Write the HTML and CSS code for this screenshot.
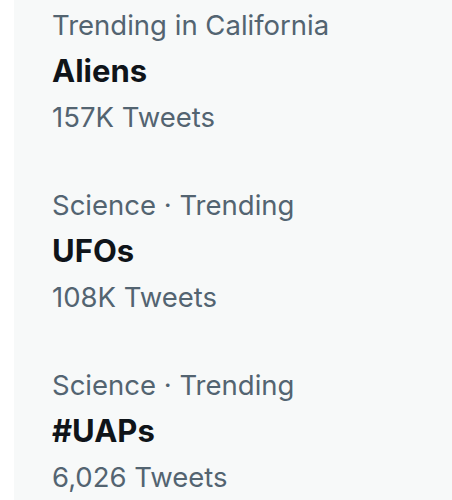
FILE: index.html
```html
<!DOCTYPE html>
<html lang="en">
<head>
  <meta charset="UTF-8">
  <meta name="viewport" content="width=device-width, initial-scale=1.0">
  <title>Trends</title>
  <link rel="stylesheet" href="styles.css">
</head>
<body>
  <div class="painel">
    <div class="trend">
      <div class="meta">Trending in California</div>
      <div class="nome">Aliens</div>
      <div class="meta">157K Tweets</div>
    </div>
    <div class="trend">
      <div class="meta">Science · Trending</div>
      <div class="nome">UFOs</div>
      <div class="meta">108K Tweets</div>
    </div>
    <div class="trend">
      <div class="meta">Science · Trending</div>
      <div class="nome">#UAPs</div>
      <div class="meta">6,026 Tweets</div>
    </div>
  </div>
</body>
</html>
```

FILE: styles.css
```css
body { margin: 0; background: #ffffff; font-family: Inter, "Noto Sans", sans-serif; }
.painel {
  margin-left: 14px; background-color: #f7f9f9; min-height: 100vh; box-sizing: border-box; padding-top: 2px;
}
.trend { padding: 0 0 42px 38px; }
.trend:last-child { padding-bottom: 0; }
.meta { color: #536471; font-size: 27.5px; line-height: 46px; }
.nome { color: #0f1419; font-size: 31px; font-weight: bold; line-height: 46px; }
```
